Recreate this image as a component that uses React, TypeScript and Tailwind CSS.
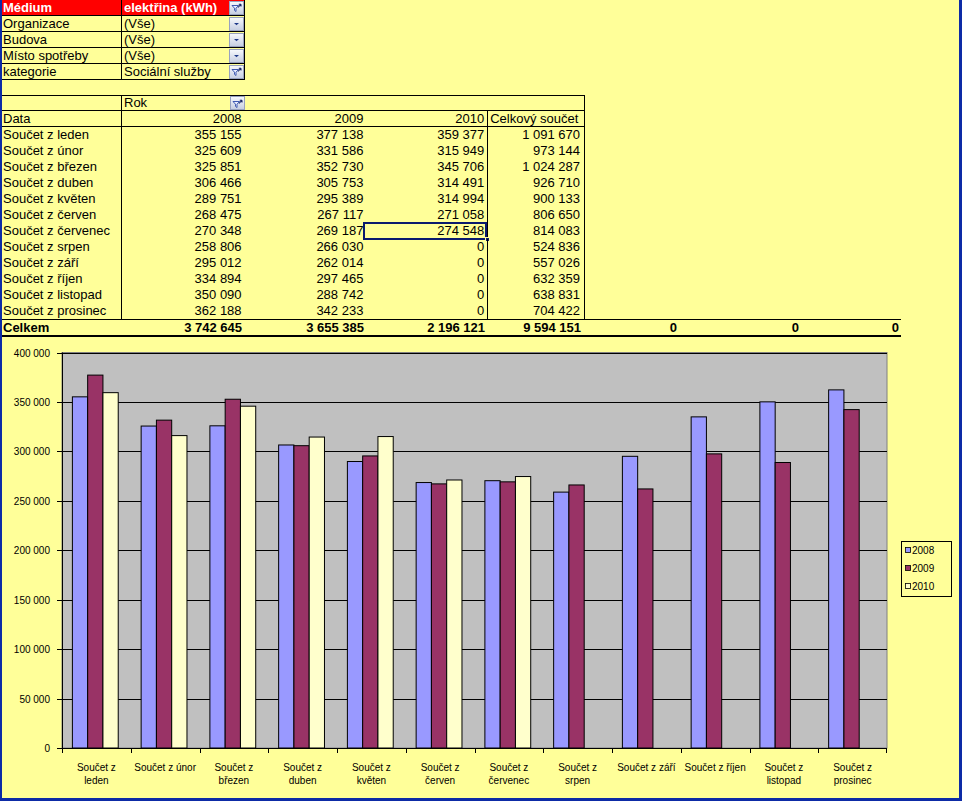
import React from 'react';

const months = ['leden', 'únor', 'březen', 'duben', 'květen', 'červen', 'červenec', 'srpen', 'září', 'říjen', 'listopad', 'prosinec'];

const y2008 = [355155, 325609, 325851, 306466, 289751, 268475, 270348, 258806, 295012, 334894, 350090, 362188];
const y2009 = [377138, 331586, 352730, 305753, 295389, 267117, 269187, 266030, 262014, 297465, 288742, 342233];
const y2010 = [359377, 315949, 345706, 314491, 314994, 271058, 274548, 0, 0, 0, 0, 0];
// grand totals as shown in the report (rounded sources)
const totals = [1091670, 973144, 1024287, 926710, 900133, 806650, 814083, 524836, 557026, 632359, 638831, 704422];

const fmt = (n: number) => n.toString().replace(/\B(?=(\d{3})+(?!\d))/g, ' ');

const series = [
  { name: '2008', data: y2008, color: '#9999ff' },
  { name: '2009', data: y2009, color: '#993366' },
  { name: '2010', data: y2010, color: '#ffffcc' },
];

function DropButton({ filter }: { filter?: boolean }) {
  return (
    <div className="flex h-[14px] w-[15px] shrink-0 items-center justify-center border border-[#98a2bf] bg-gradient-to-b from-[#f6f8fc] to-[#c7cfe2]">
      {filter ? (
        <svg width="11" height="9" viewBox="0 0 11 9">
          <path d="M1 2.5h6.5L5 5.2V8.5L3.5 7.4V5.2z" fill="#e8eeff" stroke="#2d4aa8" strokeWidth="0.9" />
          <path d="M7 4.5L10 1.2M10 1.2H7.8M10 1.2V3.4" stroke="#1b2a66" strokeWidth="1.1" fill="none" />
        </svg>
      ) : (
        <svg width="7" height="4" viewBox="0 0 7 4">
          <path d="M1 1h5L3.5 3.2z" fill="#1f3a8a" />
        </svg>
      )}
    </div>
  );
}

function FilterRow({ label, value, filter, head }: { label: string; value: string; filter?: boolean; head?: boolean }) {
  return (
    <div className={`flex h-4 border-b border-black ${head ? 'bg-[#ff0000] font-bold text-white' : ''}`}>
      <div className="w-[120px] border-r border-black pl-[1px] leading-[15px]">{label}</div>
      <div className="flex w-[123px] items-center justify-between border-r border-black pl-[2px]">
        <span className="leading-[15px]">{value}</span>
        <DropButton filter={filter} />
      </div>
    </div>
  );
}

function Chart() {
  const L = 62;
  const R = 887;
  const T = 352.5;
  const B = 748;
  const cw = (R - L) / 12;
  const bw = cw / 4.5;
  const yOf = (v: number) => B - (v / 400000) * (B - T);
  const ticks = [0, 1, 2, 3, 4, 5, 6, 7, 8];

  return (
    <svg width="956" height="460" viewBox="2 337 956 460" fontFamily="'Liberation Sans', Arial, sans-serif" fontSize="10">
      <rect x={L} y={T} width={R - L} height={B - T} fill="#c0c0c0" stroke="#808080" />
      {ticks.slice(1).map((k) => (
        <line key={k} x1={L} x2={R} y1={Math.round(yOf(k * 50000)) + 0.5} y2={Math.round(yOf(k * 50000)) + 0.5} stroke="#000" />
      ))}
      {months.map((m, i) =>
        series.map((s, j) => {
          const v = s.data[i];
          if (!v) return null;
          const x = L + i * cw + 0.68 * bw + j * bw;
          return (
            <rect key={m + s.name} x={x} y={yOf(v)} width={bw} height={B - yOf(v)} fill={s.color} stroke="#000" strokeWidth="1" />
          );
        })
      )}
      <line x1={L + 0.5} x2={L + 0.5} y1={T} y2={B} stroke="#000" />
      <line x1={L} x2={R} y1={B + 0.5} y2={B + 0.5} stroke="#000" />
      {ticks.map((k) => {
        const y = Math.round(yOf(k * 50000)) + 0.5;
        return (
          <g key={k}>
            <line x1={57} x2={L} y1={y} y2={y} stroke="#000" />
            <text x={50} y={y + 3.5} textAnchor="end" fill="#000">
              {fmt(k * 50000)}
            </text>
          </g>
        );
      })}
      {months.map((m, i) => {
        const x0 = Math.round(L + i * cw) + 0.5;
        const cx = L + i * cw + cw / 2;
        const single = m === 'únor' || m === 'září' || m === 'říjen';
        return (
          <g key={m}>
            <line x1={x0} x2={x0} y1={B} y2={B + 5} stroke="#000" />
            {single ? (
              <text x={cx} y={771} textAnchor="middle" fill="#000">
                Součet z {m}
              </text>
            ) : (
              <text x={cx} y={771} textAnchor="middle" fill="#000">
                <tspan x={cx}>Součet z</tspan>
                <tspan x={cx} dy={13}>
                  {m}
                </tspan>
              </text>
            )}
          </g>
        );
      })}
      <line x1={R - 0.5} x2={R - 0.5} y1={B} y2={B + 5} stroke="#000" />
      <rect x={901.5} y={541.5} width={50} height={55} fill="#ffff99" stroke="#000" />
      {series.map((s, j) => {
        const by = 554 + j * 18;
        return (
          <g key={s.name}>
            <rect x={905.5} y={by - 6.5} width={5} height={5} fill={s.color} stroke="#000" strokeWidth="0.8" />
            <text x={912} y={by} fill="#000">
              {s.name}
            </text>
          </g>
        );
      })}
    </svg>
  );
}

export default function App() {
  return (
    <div className="h-[801px] w-[962px] overflow-hidden bg-[#ffff99] font-['Liberation_Sans',Arial,sans-serif] text-[13px] text-black">
      <div className="h-full border-b-[3px] border-l-2 border-r-[3px] border-[#0d2ba6]">
        {/* report filters */}
        <div className="w-[243px]">
          <FilterRow label="Médium" value="elektřina (kWh)" filter head />
          <FilterRow label="Organizace" value="(Vše)" />
          <FilterRow label="Budova" value="(Vše)" />
          <FilterRow label="Místo spotřeby" value="(Vše)" />
          <FilterRow label="kategorie" value="Sociální služby" filter />
        </div>

        {/* pivot table */}
        <div className="mt-[15px]">
          <div className="flex h-4 w-[583px] border-y border-r border-black">
            <div className="w-[120px] border-r border-black" />
            <div className="flex w-[123px] items-center justify-between pl-[2px]">
              <span className="leading-[14px]">Rok</span>
              <DropButton filter />
            </div>
          </div>
          <div className="flex h-4 w-[583px] border-b border-r border-black leading-[15px]">
            <div className="w-[120px] border-r border-black pl-[1px]">Data</div>
            <div className="w-[123px] pr-[3px] text-right">2008</div>
            <div className="w-[122px] pr-[3px] text-right">2009</div>
            <div className="w-[122px] border-r border-black pr-[3px] text-right">2010</div>
            <div className="w-[96px] pl-[2px]">Celkový součet</div>
          </div>
          {months.map((m, i) => (
            <div key={m} className="flex h-4 w-[583px] border-r border-black leading-[16px]">
              <div className="w-[120px] border-r border-black pl-[1px]">Součet z {m}</div>
              <div className="w-[123px] pr-[3px] text-right">{fmt(y2008[i])}</div>
              <div className="w-[122px] pr-[3px] text-right">{fmt(y2009[i])}</div>
              <div className="relative w-[122px] border-r border-black pr-[3px] text-right">
                {fmt(y2010[i])}
                {i === 6 && (
                  <>
                    <div className="absolute -left-[3px] -top-[1px] h-[18px] w-[124px] border-2 border-[#0a1a6e]" />
                    <div className="absolute -bottom-[3px] -right-[3px] h-[5px] w-[5px] border border-[#ffff99] bg-[#0a1a6e]" />
                  </>
                )}
              </div>
              <div className="w-[96px] pr-[4px] text-right">{fmt(totals[i])}</div>
            </div>
          ))}
          <div className="flex h-[18px] w-[899px] border-b-2 border-t border-black font-bold leading-[15px]">
            <div className="w-[120px] pl-[1px]">Celkem</div>
            <div className="w-[123px] pr-[3px] text-right">3 742 645</div>
            <div className="w-[122px] pr-[3px] text-right">3 655 385</div>
            <div className="w-[122px] pr-[4px] text-right">2 196 121</div>
            <div className="w-[96px] pr-[4px] text-right">9 594 151</div>
            <div className="w-[96px] pr-[4px] text-right">0</div>
            <div className="w-[122px] pr-[4px] text-right">0</div>
            <div className="w-[98px] pr-[2px] text-right">0</div>
          </div>
        </div>

        {/* pivot chart */}
        <Chart />
      </div>
    </div>
  );
}
